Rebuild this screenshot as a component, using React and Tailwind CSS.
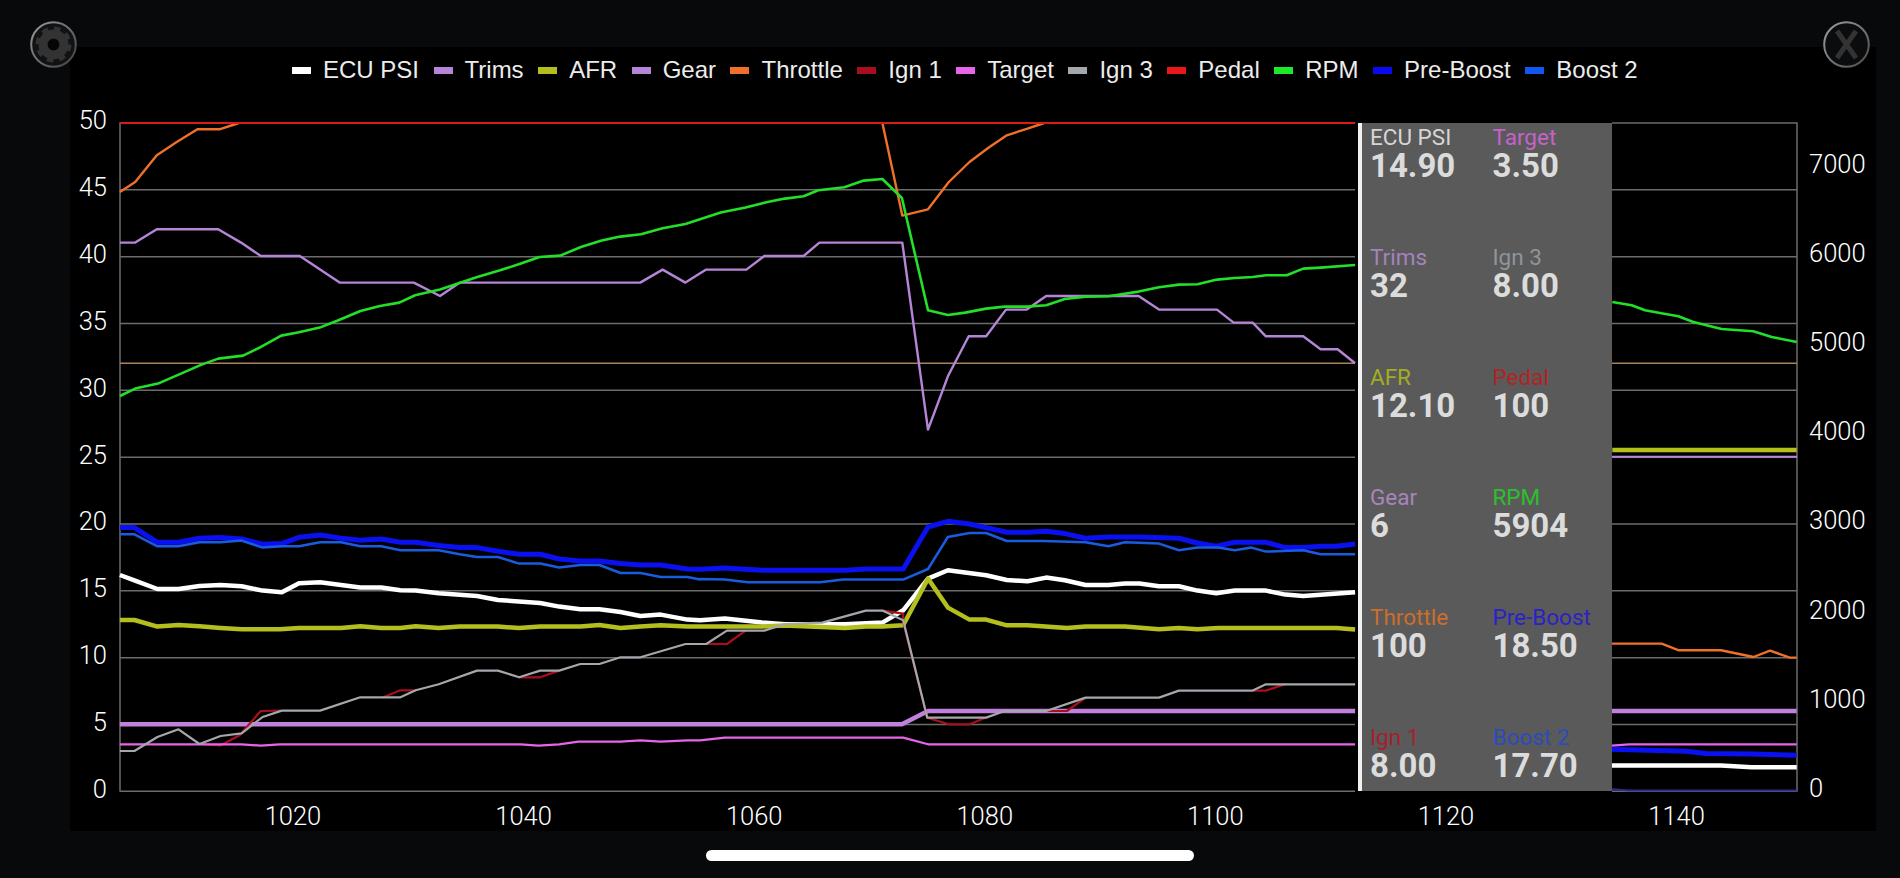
import React from "react";

// the traces were read off zoomed crops, so each helper maps crop coordinates to page pixels
const crop = (ox, oy, sx) => (pts) => pts.map(([x, y]) => [x / sx + ox, y / 3 + oy]);
const z3 = crop(1300, 450, 2.613);
const z4 = crop(100, 450, 2.613);
const z5 = crop(700, 100, 2.412);
const z6 = crop(700, 450, 2.412);
const z7 = crop(100, 100, 2.412);
const z10 = crop(1600, 270, 3);

const legend = [
  { name: "ECU PSI", color: "bg-[#ffffff]" },
  { name: "Trims", color: "bg-[#b586d8]" },
  { name: "AFR", color: "bg-[#b4bf1e]" },
  { name: "Gear", color: "bg-[#b586d8]" },
  { name: "Throttle", color: "bg-[#f0702a]" },
  { name: "Ign 1", color: "bg-[#a80f1c]" },
  { name: "Target", color: "bg-[#e864e8]" },
  { name: "Ign 3", color: "bg-[#a3a8ad]" },
  { name: "Pedal", color: "bg-[#e81818]" },
  { name: "RPM", color: "bg-[#1ee82a]" },
  { name: "Pre-Boost", color: "bg-[#0a0af0]" },
  { name: "Boost 2", color: "bg-[#1058f0]" },
];

const series = [
  {
    stroke: "#ffffff",
    width: 4.5,
    lines: [
      [
        ...z4([[52,374],[90,390],[150,416],[205,416],[260,407],[315,404],[370,408],[425,421],[475,426],[520,399],[575,396],[630,404],[680,412],[735,412],[785,420],[825,421],[885,429],[985,437],[1040,449],[1150,458],[1200,469],[1255,477],[1305,477],[1360,485],[1412,497],[1465,493],[1535,508],[1568,510]]),
        ...z6([[0,510],[60,505],[150,517],[205,522],[350,522],[440,517],[490,480],[550,385],[598,360],[690,375],[740,389],[790,393],[835,382],[880,390],[930,404],[985,404],[1025,400],[1060,400],[1107,408],[1155,408],[1200,421],[1245,429],[1290,421],[1365,421],[1412,433],[1455,437],[1580,426]]),
      ],
      z3([[815,946],[1100,946],[1180,951],[1298,951]]),
    ],
  },
  {
    stroke: "#b586d8",
    width: 2.4,
    lines: [
      [
        ...z7([[48,427],[85,427],[137,387],[285,387],[340,427],[388,467],[482,467],[578,547],[757,547],[820,587],[868,547],[1303,547],[1357,508],[1412,547]]),
        ...z5([[15,508],[112,508],[155,467],[250,467],[288,427],[488,427],[550,988],[598,828],[648,708],[690,708],[738,628],[788,628],[835,587],[1058,587],[1107,628],[1247,628],[1287,667],[1333,667],[1365,708],[1455,708],[1497,747],[1538,747],[1580,789]]),
      ],
    ],
  },
  {
    stroke: "#b4bf1e",
    width: 4.5,
    lines: [
      [
        ...z4([[52,509],[90,509],[150,529],[205,524],[260,528],[315,533],[370,537],[470,537],[520,533],[630,533],[680,528],[735,533],[785,533],[825,528],[885,533],[940,529],[1040,529],[1095,533],[1150,529],[1255,529],[1305,524],[1360,533],[1412,529],[1465,525],[1535,529],[1568,529]]),
        ...z6([[0,529],[150,529],[205,526],[350,533],[400,529],[440,529],[490,525],[550,385],[598,472],[650,508],[690,508],[740,525],[790,525],[885,533],[930,529],[1025,529],[1107,537],[1155,533],[1200,537],[1250,533],[1535,533],[1580,538]]),
      ],
      z10([[37,539],[590,539]]),
    ],
  },
  {
    stroke: "#c080dc",
    width: 4.5,
    lines: [
      [...z4([[52,822],[1568,822]]), ...z6([[487,822],[550,782],[1580,782]])],
      z3([[815,782],[1298,782]]),
    ],
  },
  {
    stroke: "#f0702a",
    width: 2.4,
    lines: [
      z7([[48,275],[85,245],[137,165],[185,125],[235,87],[288,87],[335,68]]),
      z5([[440,68],[488,346],[550,327],[600,245],[650,185],[695,143],[740,105],[790,85],[830,68]]),
      z3([[815,580],[945,580],[990,600],[1100,600],[1185,620],[1228,601],[1280,622],[1298,622]]),
    ],
  },
  {
    stroke: "#a80f1c",
    width: 2.2,
    lines: [
      z4([[260,881],[315,885],[365,855],[420,782],[470,781]]),
      z4([[740,741],[785,720],[825,720]]),
      z4([[1095,681],[1150,681],[1200,661]]),
      z6([[0,581],[65,581],[110,541]]),
      z6([[440,481],[490,490],[490,515],[548,802],[600,822],[650,822],[690,802]]),
      z6([[835,782],[885,782],[930,742]]),
      z6([[1333,721],[1365,721],[1412,702]]),
    ],
  },
  {
    stroke: "#e864e8",
    width: 2.2,
    lines: [
      [
        ...z4([[52,882],[370,882],[420,886],[470,882],[1100,882],[1145,886],[1200,882],[1250,874],[1360,874],[1412,870],[1465,874],[1535,870],[1568,870]]),
        ...z6([[0,870],[60,862],[490,862],[550,882],[1580,882]]),
      ],
      z3([[815,886],[860,882],[1298,882]]),
    ],
  },
  {
    stroke: "#a3a8ad",
    width: 2.2,
    lines: [
      [
        ...z4([[52,902],[90,902],[150,860],[205,837],[260,881],[315,857],[370,849],[425,800],[475,781],[575,781],[680,741],[785,741],[825,720],[885,702],[985,661],[1040,661],[1095,681],[1150,661],[1200,661],[1255,641],[1305,641],[1360,621],[1412,621],[1530,581],[1568,581]]),
        ...z6([[0,581],[15,581],[65,541],[155,541],[205,521],[295,517],[400,481],[440,481],[490,510],[548,802],[690,802],[735,782],[835,782],[930,742],[1107,742],[1155,721],[1333,721],[1365,702],[1580,702]]),
      ],
    ],
  },
  {
    stroke: "#d81c1c",
    width: 2,
    lines: [[[120, 122.7], [1355, 122.7]]],
  },
  {
    stroke: "#22e02a",
    width: 2.6,
    lines: [
      [
        ...z7([[48,887],[85,865],[140,850],[245,793],[285,775],[345,766],[385,742],[437,706],[480,696],[530,682],[575,660],[628,632],[675,617],[722,607],[760,585],[820,568],[910,530],[965,510],[1010,492],[1060,470],[1110,466],[1160,440],[1210,421],[1255,409],[1305,402],[1357,384],[1412,371]]),
        ...z5([[0,357],[50,337],[110,322],[160,306],[205,295],[250,288],[285,270],[348,261],[395,241],[440,236],[487,293],[550,630],[598,644],[640,637],[690,625],[735,619],[790,619],[835,615],[880,596],[930,589],[985,588],[1058,574],[1107,561],[1155,553],[1200,552],[1247,538],[1290,533],[1333,530],[1365,525],[1415,525],[1455,505],[1497,502],[1580,494]]),
      ],
      z10([[37,95],[95,105],[135,120],[180,128],[235,138],[280,155],[365,176],[460,183],[515,200],[590,215]]),
    ],
  },
  {
    stroke: "#0a10f0",
    width: 5,
    lines: [
      [
        ...z4([[52,232],[90,232],[150,276],[205,276],[260,264],[315,262],[370,266],[425,282],[475,280],[520,261],[575,254],[630,264],[680,270],[735,266],[785,276],[825,276],[885,286],[940,292],[985,292],[1040,303],[1095,312],[1150,312],[1200,326],[1255,332],[1305,332],[1360,340],[1412,344],[1465,344],[1535,356],[1568,357]]),
        ...z6([[0,357],[60,353],[150,360],[350,360],[400,356],[490,356],[550,230],[598,213],[650,221],[740,246],[790,246],[835,243],[880,250],[930,264],[985,260],[1060,260],[1155,264],[1200,278],[1245,288],[1290,276],[1365,276],[1412,292],[1455,292],[1500,288],[1535,288],[1580,281]]),
      ],
      z3([[815,897],[1010,903],[1060,910],[1180,911],[1298,915]]),
    ],
  },
  {
    stroke: "#1a5ce0",
    width: 2.5,
    lines: [
      [
        ...z4([[52,252],[90,252],[150,288],[205,288],[260,276],[315,276],[370,271],[425,292],[475,288],[520,288],[575,276],[630,276],[680,288],[735,288],[785,300],[885,300],[940,312],[985,320],[1040,320],[1095,340],[1150,340],[1200,352],[1255,344],[1305,344],[1360,368],[1412,368],[1465,380],[1535,380],[1568,388]]),
        ...z6([[0,386],[60,388],[115,396],[290,396],[345,388],[490,388],[550,356],[598,260],[650,248],[690,248],[740,272],[830,272],[930,276],[985,288],[1025,276],[1107,280],[1155,300],[1200,292],[1250,292],[1290,300],[1330,292],[1365,304],[1455,300],[1497,312],[1580,312]]),
      ],
    ],
  },
];

const stats = [
  { label: "ECU PSI", value: "14.90", color: "text-[#d6d6d6]" },
  { label: "Target", value: "3.50", color: "text-[#c463c8]" },
  { label: "Trims", value: "32", color: "text-[#a483bb]" },
  { label: "Ign 3", value: "8.00", color: "text-[#8f959a]" },
  { label: "AFR", value: "12.10", color: "text-[#a3ad22]" },
  { label: "Pedal", value: "100", color: "text-[#b02424]" },
  { label: "Gear", value: "6", color: "text-[#a785bd]" },
  { label: "RPM", value: "5904", color: "text-[#2cc02c]" },
  { label: "Throttle", value: "100", color: "text-[#cc6e2c]" },
  { label: "Pre-Boost", value: "18.50", color: "text-[#2a22c4]" },
  { label: "Ign 1", value: "8.00", color: "text-[#a5202c]" },
  { label: "Boost 2", value: "17.70", color: "text-[#2a4cbc]" },
];

const gridYs = [0, 1, 2, 3, 4, 5, 6, 7, 8, 9, 10].map((i) => 122.7 + i * 66.83);

const toPoints = (pts) => pts.map(([x, y]) => `${x.toFixed(1)},${y.toFixed(1)}`).join(" ");

const Chart = () => (
  <svg viewBox="120 122.7 1677 668.3" className="absolute inset-0 w-full h-full overflow-visible">
    {gridYs.map((y) => (
      <g key={y} stroke="#6c6c6c" strokeWidth="1.5">
        <line x1="120" x2="1355" y1={y} y2={y} />
        <line x1="1612" x2="1797" y1={y} y2={y} />
      </g>
    ))}
    <line x1="120" x2="120" y1="122" y2="791.5" stroke="#6c6c6c" strokeWidth="1.5" />
    <line x1="1797" x2="1797" y1="122" y2="791.5" stroke="#6c6c6c" strokeWidth="1.5" />
    <g stroke="#a8825a" strokeWidth="1.5">
      <line x1="120" x2="1355" y1="363" y2="363" />
      <line x1="1612" x2="1797" y1="363" y2="363" />
    </g>
    <line x1="1612" x2="1797" y1="456.5" y2="456.5" stroke="#c080dc" strokeWidth="2" />
    {series.map((s, i) => (
      <g key={i} fill="none" stroke={s.stroke} strokeWidth={s.width} strokeLinejoin="round">
        {s.lines.map((pts, j) => (
          <polyline key={j} points={toPoints(pts)} />
        ))}
      </g>
    ))}
    <polyline points={toPoints(z3([[815, 1017], [860, 1021], [1298, 1021]]))} fill="none" stroke="#2c2c90" strokeWidth="2" />
  </svg>
);

const App = () => {
  return (
    <div className="relative w-[1900px] h-[878px] overflow-hidden bg-[#08090b] pt-[47px] pl-[70px] [font-family:Roboto,'Liberation_Sans',sans-serif] text-white">
      <div className="w-[1806px] h-[784px] bg-black flex flex-col">
        <div className="h-[46px] mb-[29.7px] pl-[222px] flex items-center gap-[14.5px] text-[24px] text-[#ececec] [font-family:'Liberation_Sans',sans-serif] leading-none whitespace-nowrap">
          {legend.map((item) => (
            <div key={item.name} className="flex items-center gap-[12px]">
              <span className={`w-[19px] h-[7px] ${item.color}`} />
              <span>{item.name}</span>
            </div>
          ))}
        </div>

        <div className="flex h-[668.3px] text-[25.5px] font-light">
          <div className="w-[37px] mr-[13px] -mt-[35.5px] flex flex-col">
            {[50, 45, 40, 35, 30, 25, 20, 15, 10, 5, 0].map((n) => (
              <div key={n} className="h-[66.83px] shrink-0 flex items-center justify-end">{n}</div>
            ))}
          </div>

          <div className="relative w-[1677px]">
            <Chart />
            <div className="absolute left-[1238px] top-0 bottom-0 w-[254px] border-l-4 border-[#f2f2f2] bg-[#5a5a5a] pl-[8px] pt-[2px] grid grid-cols-[122.5px_1fr] auto-rows-[68px] gap-y-[52px]">
              {stats.map((s) => (
                <div key={s.label}>
                  <div className={`text-[22.5px] leading-[24px] font-normal ${s.color}`}>{s.label}</div>
                  <div className="text-[33px] leading-[33px] font-bold text-[#dcdcdc]">{s.value}</div>
                </div>
              ))}
            </div>
          </div>

          <div className="ml-[12px] -mt-[3px] flex flex-col">
            {[7000, 6000, 5000, 4000, 3000, 2000, 1000, 0].map((n) => (
              <div key={n} className="h-[89.1px] shrink-0 flex items-center">{n}</div>
            ))}
          </div>
        </div>

        <div className="h-[40px] pt-[11px] pl-[107.7px] flex items-center text-[25.5px] font-light">
          {[1020, 1040, 1060, 1080, 1100, 1120, 1140].map((n) => (
            <div key={n} className="w-[230.6px] text-center">{n}</div>
          ))}
        </div>
      </div>

      <div className="mt-[19px] -ml-[70px] flex justify-center">
        <div className="w-[488px] h-[11px] rounded-full bg-white" />
      </div>

      <button className="absolute left-[30px] top-[21px] w-[47px] h-[47px]">
        <svg viewBox="0 0 47 47" className="w-full h-full">
          <defs>
            <linearGradient id="ring" x1="0" y1="0" x2="1" y2="1">
              <stop offset="0" stopColor="#9a9a9a" />
              <stop offset="1" stopColor="#3f3f3f" />
            </linearGradient>
          </defs>
          <circle cx="23.5" cy="23.5" r="22.3" fill="#111214" stroke="url(#ring)" strokeWidth="2" />
          <circle cx="23.5" cy="23.5" r="10.5" fill="none" stroke="#333333" strokeWidth="9" />
          <circle cx="23.5" cy="23.5" r="16" fill="none" stroke="#333333" strokeWidth="4" strokeDasharray="6.5 6.07" />
          <circle cx="23.5" cy="23.5" r="5.5" fill="#050505" />
        </svg>
      </button>
      <button className="absolute left-[1823px] top-[21px] w-[47px] h-[47px]">
        <svg viewBox="0 0 47 47" className="w-full h-full">
          <defs>
            <linearGradient id="ring2" x1="0" y1="0" x2="1" y2="1">
              <stop offset="0" stopColor="#a0a0a0" />
              <stop offset="1" stopColor="#4a4a4a" />
            </linearGradient>
          </defs>
          <circle cx="23.5" cy="23.5" r="22.3" fill="#0b0c0e" stroke="url(#ring2)" strokeWidth="2" />
          <path d="M14 10 L33 37 M33 10 L14 37" stroke="#333333" strokeWidth="5" fill="none" />
        </svg>
      </button>
    </div>
  );
};

export default App;
